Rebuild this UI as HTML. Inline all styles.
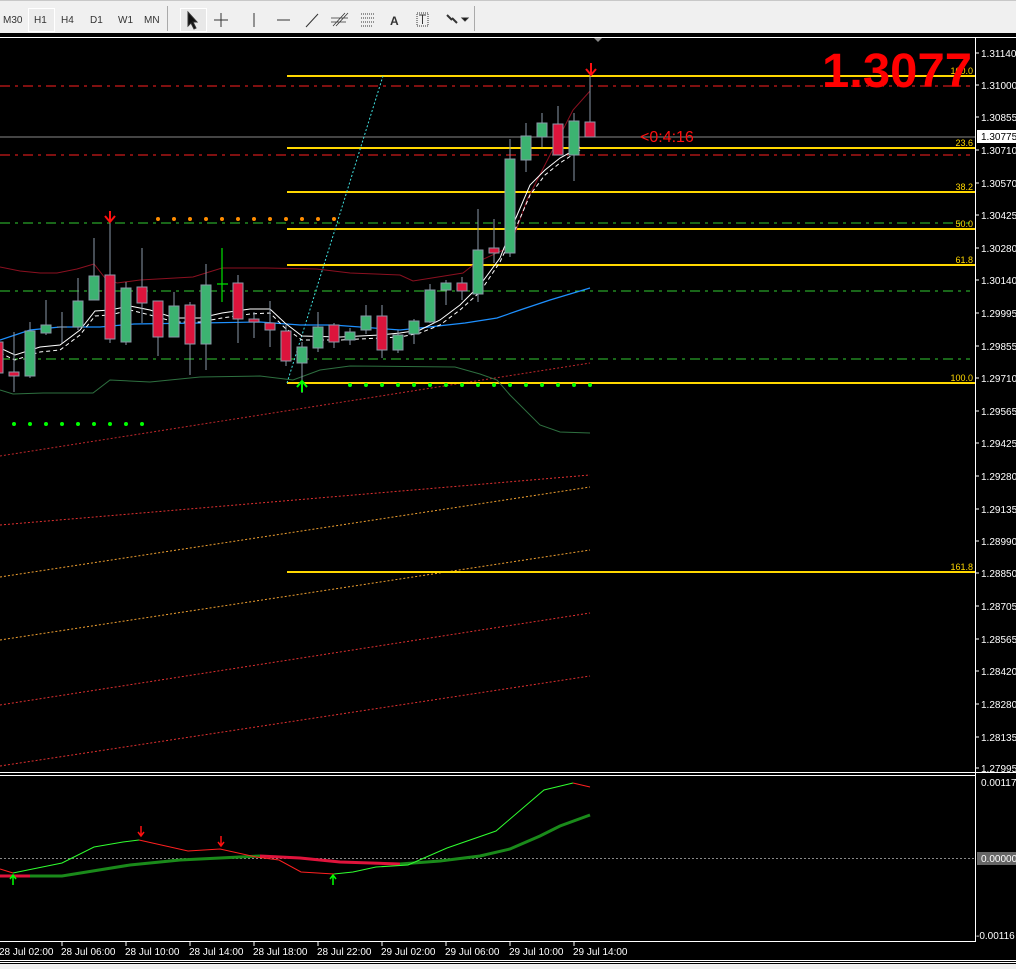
<!DOCTYPE html>
<html><head><meta charset="utf-8"><style>
html,body{margin:0;padding:0;width:1016px;height:969px;overflow:hidden;background:#000;font-family:"Liberation Sans",sans-serif}
#tb{position:absolute;left:0;top:0;width:1016px;height:33px;background:#f0f0f0;border-top:1px solid #c8c8c8;box-sizing:border-box}
.b{position:absolute;top:14px;font-size:10px;color:#333}
svg{position:absolute;left:0;top:0}
</style></head><body>
<div id="tb">
<span class="b" style="left:3px">M30</span>
<div style="position:absolute;left:28px;top:7px;width:25px;height:22px;border:1px solid #fff;background:#ececec"></div>
<span class="b" style="left:34px">H1</span><span class="b" style="left:61px">H4</span><span class="b" style="left:90px">D1</span><span class="b" style="left:118px">W1</span><span class="b" style="left:144px">MN</span>
<div style="position:absolute;left:167px;top:5px;width:1px;height:25px;background:#aaa"></div>
<div style="position:absolute;left:180px;top:7px;width:25px;height:22px;border:1px solid #fff;background:#e8e8e8"></div>
<span class="b" style="left:390px;font-weight:bold;font-size:12px;top:13px">A</span>
<div style="position:absolute;left:474px;top:5px;width:1px;height:25px;background:#aaa"></div>
</div>
<svg width="1016" height="969" viewBox="0 0 1016 969" xmlns="http://www.w3.org/2000/svg" font-family="Liberation Sans, sans-serif">
<g stroke="#333" fill="none" stroke-width="1">
<path d="M188 12 L188 26 L191 23 L194 29 L196 28 L193 22 L197 22 Z" fill="#111"/>
<path d="M214 20 H228 M221 13 V27"/>
<path d="M254 13 V27"/><path d="M277 20 H290"/><path d="M306 27 L318 14"/>
<path d="M333 26 L345 13 M336 26 L348 13 M331 18 H348 M331 22 H346" stroke-width="0.8"/>
<path d="M361 14 H374 M361 18 H374 M361 22 H374 M361 26 H372" stroke-dasharray="1 1"/>
<rect x="417" y="13" width="11" height="13" stroke-dasharray="1 1"/><path d="M419 15 H426 M422.5 15 V24"/>
<path d="M447 15 L452 20 M452 18 L457 23" stroke-width="2"/><path d="M462 18 L468 18 L465 21 Z" fill="#111"/>
</g>
<rect x="0" y="33" width="1016" height="4" fill="#000"/>
<rect x="0" y="37" width="1016" height="1" fill="#fff"/>
<path d="M594 38 L598 42 L602 38 Z" fill="#888"/>
<g fill="none" stroke-width="1" stroke-dasharray="2 2">
<path d="M0 456 L590 363" stroke="#c0282c"/>
<path d="M0 525 L590 475" stroke="#e03030"/>
<path d="M0 577 L590 487" stroke="#f0a030"/>
<path d="M0 640 L590 550" stroke="#f0a030"/>
<path d="M0 705 L590 613" stroke="#e03030"/>
<path d="M0 766 L590 676" stroke="#e03030"/>
</g>
<g fill="none" stroke-width="1" stroke-dasharray="10 5 3 5">
<path d="M0 86 H970" stroke="#ff2020"/>
<path d="M0 155 H970" stroke="#ff2020"/>
<path d="M0 223 H970" stroke="#32cd32"/>
<path d="M0 291 H970" stroke="#32cd32"/>
<path d="M0 359 H970" stroke="#32cd32"/>
</g>
<path d="M0 137 H976" stroke="#888" stroke-width="1"/>
<g stroke="#ffd700" stroke-width="2">
<path d="M287 76 H975 M287 148 H975 M287 192 H975 M287 229 H975 M287 265 H975 M287 383 H975 M287 572 H975"/>
</g>
<g fill="#ffd700" font-size="9" text-anchor="end">
<text x="973" y="74">100.0</text><text x="973" y="146">23.6</text><text x="973" y="190">38.2</text><text x="973" y="227">50.0</text><text x="973" y="263">61.8</text><text x="973" y="381">100.0</text><text x="973" y="570">161.8</text>
</g>
<path d="M287 383 L383 76" stroke="#40e0e0" stroke-dasharray="2 2" fill="none"/>
<path d="M0 267 L20 271 L40 273 L57 273 L77 269 L94 264 L105 278 L117 283 L140 280 L193 277 L222 268 L267 268 L317 269 L350 273 L400 275 L413 281 L463 273 L477 262 L510 247 L527 200 L573 110 L590 91" stroke="#8b1020" fill="none"/>
<path d="M0 390 L13 394 L43 393 L93 393 L110 380 L150 382 L200 377 L260 376 L293 380 L320 370 L350 366 L455 367 L480 374 L497 380 L510 395 L540 425 L560 432 L590 433" stroke="#2e7040" fill="none"/>
<path d="M0 340 L30 330 L60 327 L100 327 L134 324 L200 323 L260 322 L300 325 L333 325 L400 330 L420 328 L465 323 L497 318 L520 310 L550 300 L590 288" stroke="#1e90ff" fill="none" stroke-width="1.2"/>
<path d="M0 348 L15 355 L40 347 L60 345 L80 330 L95 311 L110 310 L130 306 L150 310 L175 318 L200 318 L222 313 L250 309 L270 309 L285 323 L302 336 L340 337 L380 335 L400 333 L420 330 L440 320 L460 305 L480 285 L500 258 L515 220 L530 185 L545 170 L560 158 L580 147" stroke="#fff" fill="none"/>
<path d="M0 353 L15 360 L40 352 L60 350 L80 335 L95 316 L110 315 L130 310 L150 315 L175 322 L200 322 L222 318 L250 314 L270 313 L285 328 L302 340 L340 340 L380 338 L400 337 L420 333 L440 325 L460 310 L480 292 L500 262 L515 230 L530 195 L545 175 L560 163 L580 150" stroke="#fff" fill="none" stroke-dasharray="4 3"/>
<g stroke="#8a98a8" stroke-width="1">
<path d="M-2 335V380M14 332V392M30 322V378M46 300V335M62 312V343M78 278V330M94 238V300M110 220V343M126 282V345M142 248V323M158 301V356M174 292V337M190 302V375M206 264V370M238 275V343M254 312V338M270 301V347M286 325V366M302 342V393M318 312V352M334 323V348M350 328V345M366 305V334M382 305V358M398 330V353M414 319V344M430 284V323M446 280V305M462 277V300M478 209V302M494 219V263M510 139V257M526 123V172M542 113V147M558 106V155M574 113V181M590 73V137M57 327H67"/>
</g>
<g stroke="#8a98a8" stroke-width="1">
<g fill="#dc143c">
<rect x="-7" y="342" width="10" height="31"/><rect x="9" y="372" width="10" height="4"/><rect x="105" y="275" width="10" height="64"/><rect x="137" y="287" width="10" height="16"/><rect x="153" y="301" width="10" height="36"/><rect x="185" y="305" width="10" height="39"/><rect x="233" y="283" width="10" height="36"/><rect x="249" y="319" width="10" height="3"/><rect x="265" y="323" width="10" height="7"/><rect x="281" y="331" width="10" height="30"/><rect x="329" y="325" width="10" height="17"/><rect x="377" y="316" width="10" height="34"/><rect x="457" y="283" width="10" height="8"/><rect x="489" y="248" width="10" height="5"/><rect x="553" y="124" width="10" height="31"/><rect x="585" y="122" width="10" height="15"/>
</g>
<g fill="#3cb371">
<rect x="25" y="331" width="10" height="45"/><rect x="41" y="325" width="10" height="8"/><rect x="73" y="301" width="10" height="26"/><rect x="89" y="276" width="10" height="24"/><rect x="121" y="288" width="10" height="54"/><rect x="169" y="306" width="10" height="31"/><rect x="201" y="285" width="10" height="59"/><rect x="297" y="347" width="10" height="16"/><rect x="313" y="327" width="10" height="21"/><rect x="345" y="332" width="10" height="8"/><rect x="361" y="316" width="10" height="14"/><rect x="393" y="335" width="10" height="15"/><rect x="409" y="321" width="10" height="13"/><rect x="425" y="290" width="10" height="32"/><rect x="441" y="283" width="10" height="7"/><rect x="473" y="250" width="10" height="44"/><rect x="505" y="159" width="10" height="94"/><rect x="521" y="136" width="10" height="24"/><rect x="537" y="123" width="10" height="14"/><rect x="569" y="121" width="10" height="34"/>
</g>
</g>
<path d="M222 248V302M217 284H228" stroke="#00e000" stroke-width="1.2"/>
<g fill="#ff8c00"><circle cx="158" cy="219" r="2"/><circle cx="174" cy="219" r="2"/><circle cx="190" cy="219" r="2"/><circle cx="206" cy="219" r="2"/><circle cx="222" cy="219" r="2"/><circle cx="238" cy="219" r="2"/><circle cx="254" cy="219" r="2"/><circle cx="270" cy="219" r="2"/><circle cx="286" cy="219" r="2"/><circle cx="302" cy="219" r="2"/><circle cx="318" cy="219" r="2"/><circle cx="334" cy="219" r="2"/></g>
<g fill="#00ff00"><circle cx="350" cy="385" r="2"/><circle cx="366" cy="385" r="2"/><circle cx="382" cy="385" r="2"/><circle cx="398" cy="385" r="2"/><circle cx="414" cy="385" r="2"/><circle cx="430" cy="385" r="2"/><circle cx="446" cy="385" r="2"/><circle cx="462" cy="385" r="2"/><circle cx="478" cy="385" r="2"/><circle cx="494" cy="385" r="2"/><circle cx="510" cy="385" r="2"/><circle cx="526" cy="385" r="2"/><circle cx="542" cy="385" r="2"/><circle cx="558" cy="385" r="2"/><circle cx="574" cy="385" r="2"/><circle cx="590" cy="385" r="2"/>
<circle cx="14" cy="424" r="2"/><circle cx="30" cy="424" r="2"/><circle cx="46" cy="424" r="2"/><circle cx="62" cy="424" r="2"/><circle cx="78" cy="424" r="2"/><circle cx="94" cy="424" r="2"/><circle cx="110" cy="424" r="2"/><circle cx="126" cy="424" r="2"/><circle cx="142" cy="424" r="2"/></g>
<g stroke="#ff1010" stroke-width="2" fill="none"><path d="M110 211V221M105 216L110 222L115 216"/><path d="M591 63V74M586 69L591 75L596 69"/></g>
<g stroke="#00ff00" stroke-width="2" fill="none"><path d="M302 392V382M297 387L302 381L307 387"/></g>
<text x="822" y="87" font-size="48" font-weight="bold" fill="#ff0000" textLength="150" lengthAdjust="spacingAndGlyphs">1.3077</text>
<text x="640" y="142" font-size="16" fill="#ff1010">&lt;0:4:16</text>
<path d="M975.5 38V942" stroke="#fff"/>
<g fill="#fff" font-size="10">
<text x="981" y="57">1.31140</text><text x="981" y="89">1.31000</text><text x="981" y="121">1.30855</text><text x="981" y="154">1.30710</text><text x="981" y="187">1.30570</text><text x="981" y="219">1.30425</text><text x="981" y="252">1.30280</text><text x="981" y="284">1.30140</text><text x="981" y="317">1.29995</text><text x="981" y="350">1.29855</text><text x="981" y="382">1.29710</text><text x="981" y="415">1.29565</text><text x="981" y="447">1.29425</text><text x="981" y="480">1.29280</text><text x="981" y="513">1.29135</text><text x="981" y="545">1.28990</text><text x="981" y="577">1.28850</text><text x="981" y="610">1.28705</text><text x="981" y="643">1.28565</text><text x="981" y="675">1.28420</text><text x="981" y="708">1.28280</text><text x="981" y="741">1.28135</text><text x="981" y="772">1.27995</text>
</g>
<rect x="977" y="130" width="39" height="13" fill="#fff"/><text x="981" y="140" font-size="10" fill="#000">1.30775</text>
<g stroke="#fff"><path d="M976 53H979M976 85H979M976 117H979M976 150H979M976 183H979M976 215H979M976 248H979M976 280H979M976 313H979M976 346H979M976 378H979M976 411H979M976 443H979M976 476H979M976 509H979M976 541H979M976 573H979M976 606H979M976 639H979M976 671H979M976 704H979M976 737H979M976 768H979"/></g>
<path d="M0 772.5H1016M0 775.5H976" stroke="#fff"/>
<path d="M0 858.5H976" stroke="#888" stroke-dasharray="2 2"/>
<rect x="977" y="852" width="39" height="13" fill="#666"/>
<g fill="#fff" font-size="10"><text x="981" y="786">0.00117</text><text x="981" y="862">0.00000</text><text x="976" y="939">-0.00116</text></g>
<path d="M0 876L30 876L62 876L130 865L180 860L240 857L260 856" stroke="#1a8a1a" stroke-width="3" fill="none"/>
<path d="M0 876L30 876" stroke="#e0143c" stroke-width="3"/>
<path d="M260 856L300 858L340 862L400 864" stroke="#e0143c" stroke-width="3" fill="none"/>
<path d="M400 864L440 861L480 856L510 849L540 836L560 826L590 815" stroke="#1a8a1a" stroke-width="3" fill="none"/>
<path d="M0 869L13 873" stroke="#ff2020" fill="none"/>
<path d="M13 873L62 863L94 847L123 842L139 840" stroke="#30ff30" fill="none"/>
<path d="M139 840L188 851L220 849L256 857L279 860L301 872L334 874" stroke="#ff2020" fill="none"/>
<path d="M334 874L353 872L376 867L408 865L447 848L496 831L544 790L573 783" stroke="#30ff30" fill="none"/>
<path d="M573 783L590 787" stroke="#ff2020" fill="none"/>
<g stroke="#ff1010" stroke-width="1.5" fill="none"><path d="M141 826V835M138 832L141 836L144 832M221 836V845M218 842L221 846L224 842"/></g>
<g stroke="#00ff00" stroke-width="1.5" fill="none"><path d="M13 885V876M10 879L13 875L16 879M333 885V876M330 879L333 875L336 879"/></g>
<path d="M0 941.5H976" stroke="#fff"/>
<g stroke="#fff"><path d="M62 942V946M126 942V946M190 942V946M254 942V946M318 942V946M382 942V946M446 942V946M510 942V946M574 942V946"/></g>
<g fill="#fff" font-size="10"><text x="-1" y="955">28 Jul 02:00</text><text x="61" y="955">28 Jul 06:00</text><text x="125" y="955">28 Jul 10:00</text><text x="189" y="955">28 Jul 14:00</text><text x="253" y="955">28 Jul 18:00</text><text x="317" y="955">28 Jul 22:00</text><text x="381" y="955">29 Jul 02:00</text><text x="445" y="955">29 Jul 06:00</text><text x="509" y="955">29 Jul 10:00</text><text x="573" y="955">29 Jul 14:00</text></g>
<path d="M0 960.5H1016M0 962.5H1016" stroke="#fff"/>
<rect x="0" y="964" width="1016" height="5" fill="#f0f0f0"/>
</svg>
</body></html>
